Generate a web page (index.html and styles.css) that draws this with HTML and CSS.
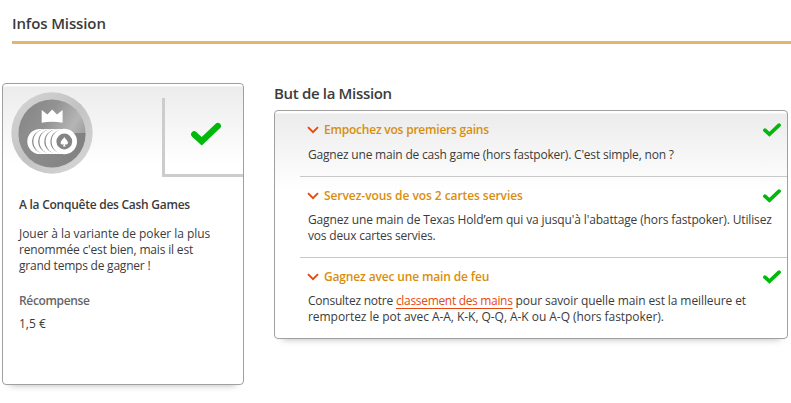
FILE: index.html
```html
<!DOCTYPE html>
<html lang="fr">
<head>
<meta charset="utf-8">
<title>Infos Mission</title>
<link rel="stylesheet" href="styles.css">
</head>
<body>
<svg class="defs" width="0" height="0" aria-hidden="true">
  <symbol id="check" viewBox="0 0 30 24"><path d="M3.2 12.4 10.7 19.2 26.8 4" fill="none" stroke="#00b90b" stroke-width="6.2" stroke-linecap="round" stroke-linejoin="miter"/></symbol>
  <symbol id="chevron" viewBox="0 0 12 8"><path d="M1 1.2 6 6.2 11 1.2" fill="none" stroke="#e8480f" stroke-width="1.9"/></symbol>
</svg>
<h1 class="page-title"><span class="title-text">Infos Mission</span></h1>
<main class="layout">
  <section class="card mission">
    <div class="mission-head">
      <svg class="badge" viewBox="0 0 82 82">
        <defs>
          <linearGradient id="rim" x1="0" y1="0" x2="1" y2="1"><stop offset="0" stop-color="#d6d6d6"/><stop offset=".5" stop-color="#c3c3c3"/><stop offset="1" stop-color="#d9d9d9"/></linearGradient>
          <linearGradient id="disc" x1="0" y1=".1" x2="1" y2=".65"><stop offset="0" stop-color="#858585"/><stop offset=".42" stop-color="#929292"/><stop offset=".75" stop-color="#b5b5b5"/><stop offset="1" stop-color="#969696"/></linearGradient>
          <linearGradient id="shade" x1="0" y1="0" x2="1" y2="0"><stop offset="0" stop-color="#8d8d8d"/><stop offset="1" stop-color="#818181"/></linearGradient>
        </defs>
        <circle cx="41" cy="41" r="40.7" fill="url(#rim)"/>
        <circle cx="41" cy="41" r="33.5" fill="url(#disc)"/>
        <path d="M7.5 43C25 47 45 40 74.5 41A33.5 33.5 0 0 1 7.5 43Z" fill="url(#shade)"/>
        <path d="M30.7 18 36.4 22.5 41.2 17.4 46 22.5 51.6 18V30.8Q41 28.8 30.7 30.8Z" fill="#fff"/>
        <g fill="#fff">
          <circle cx="28.9" cy="49.5" r="12.6"/><circle cx="32.9" cy="49.5" r="11.8" fill="#8b8b8b"/>
          <circle cx="35" cy="49.5" r="12.6"/><circle cx="39" cy="49.5" r="11.8" fill="#8b8b8b"/>
          <circle cx="41.1" cy="49.5" r="12.6"/><circle cx="45.1" cy="49.5" r="11.8" fill="#8b8b8b"/>
          <circle cx="47.2" cy="49.5" r="12.6"/><circle cx="51.2" cy="49.5" r="11.8" fill="#8b8b8b"/>
        </g>
        <circle cx="53.3" cy="49.5" r="10.3" fill="#858585" stroke="#fff" stroke-width="4.8"/>
        <path d="M53.3 45C52.4 47 49.6 48.4 49.6 50.8c0 1.8 2 2.4 3.2 1.2L52 54.4h2.6l-.8-2.4c1.2 1.2 3.2.6 3.2-1.2 0-2.4-2.8-3.8-3.7-5.8Z" fill="#fff"/>
      </svg>
      <div class="status"><svg class="check-large"><use href="#check"/></svg></div>
    </div>
    <div class="mission-body">
      <h2 class="mission-name"><span>A la Conquête des Cash Games</span></h2>
      <p class="mission-text"><span class="m1">Jouer à la variante de poker la plus</span><br><span class="m2">renommée c'est bien, mais il est</span><br><span class="m3">grand temps de gagner !</span></p>
      <h3 class="reward-title"><span>Récompense</span></h3>
      <p class="reward"><span>1,5 €</span></p>
    </div>
  </section>
  <section class="goals">
    <h2 class="goals-title"><span>But de la Mission</span></h2>
    <div class="card goal-list">
      <article class="goal first">
        <header class="goal-head"><svg class="chevron"><use href="#chevron"/></svg><h3 class="g1">Empochez vos premiers gains</h3><svg class="check-small"><use href="#check"/></svg></header>
        <p class="goal-text"><span class="t1">Gagnez une main de cash game (hors fastpoker). C'est simple, non ?</span></p>
      </article>
      <article class="goal second">
        <header class="goal-head"><svg class="chevron"><use href="#chevron"/></svg><h3 class="g2">Servez-vous de vos 2 cartes servies</h3><svg class="check-small"><use href="#check"/></svg></header>
        <p class="goal-text"><span class="t2">Gagnez une main de Texas Hold’em qui va jusqu'à l'abattage (hors fastpoker). Utilisez</span><br><span class="t3">vos deux cartes servies.</span></p>
      </article>
      <article class="goal third">
        <header class="goal-head"><svg class="chevron"><use href="#chevron"/></svg><h3 class="g3">Gagnez avec une main de feu</h3><svg class="check-small"><use href="#check"/></svg></header>
        <p class="goal-text"><span class="t4">Consultez notre <a class="link" href="#">classement des mains</a></span><span class="t4b"> pour savoir quelle main est la meilleure et</span><br><span class="t5">remportez le pot avec A-A, K-K, Q-Q, A-K ou A-Q (hors fastpoker).</span></p>
      </article>
    </div>
  </section>
</main>
</body>
</html>
```
FILE: styles.css
```css
* { box-sizing: border-box; }
body {
  margin: 0;
  height: 403px;
  overflow: hidden;
  background: #fff;
  color: #3b3b3b;
  font: 12px/16px "Trebuchet MS", "Open Sans", sans-serif;
}
h1, h2, h3, p { margin: 0; white-space: nowrap; }
svg { display: block; flex: none; }
.defs { position: absolute; }
.page-title {
  margin-left: 12px;
  height: 44px;
  padding-top: 13px;
  border-bottom: 3px solid #e0b76c;
  font-size: 15px;
  line-height: 20px;
  font-weight: 600;
  letter-spacing: -.12px;
}
.layout { display: flex; align-items: flex-start; gap: 30px; padding: 39px 3px 0 2px; }
.card {
  border: 1px solid #a0a0a0;
  border-radius: 4px;
  background: linear-gradient(#fff 2px, #ececec 3px, #fff 80px);
  box-shadow: 0 8px 7px -8px rgba(0, 0, 0, .3);
}
.mission { width: 242px; height: 302px; }
.mission-head { display: flex; justify-content: space-between; height: 93px; padding-left: 8px; }
.badge { width: 82px; height: 82px; margin-top: 8px; }
.status {
  width: 81px;
  height: 79px;
  margin-top: 14px;
  border-left: 3px solid #ccc;
  border-bottom: 3px solid #ccc;
}
.check-large { width: 30px; height: 24px; margin: 24px 0 0 26px; }
.mission-body { padding: 20px 0 0 16px; }
.mission-name { font-size: 12px; line-height: 16px; font-weight: 600; letter-spacing: -.26px; }
.mission-text { margin-top: 13px; line-height: 16px; }
.m1 { letter-spacing: -.05px; }
.m2 { letter-spacing: -.17px; }
.m3 { letter-spacing: -.22px; }
.reward-title { margin-top: 19px; font-size: 12px; line-height: 16px; font-weight: 600; letter-spacing: -.35px; color: #666; }
.reward { margin-top: 7px; }
.goals { width: 514px; }
.goals-title { height: 27px; font-size: 15px; line-height: 20px; font-weight: 600; letter-spacing: -.33px; }
.goal-list { height: 229px; padding-left: 25px; }
.goal { padding-left: 8px; border-top: 1px solid #c8c8c8; }
.goal.first { height: 65px; border-top: 0; padding-top: 11px; }
.goal.second { height: 81px; padding-top: 11px; }
.goal.third { height: 80px; padding-top: 11px; }
.goal-head { display: flex; height: 16px; align-items: center; padding-right: 6px; }
.goal-head h3 { flex: 1; font-size: 12px; line-height: 16px; font-weight: 600; color: #d98e0b; }
.goal-head .g1 { letter-spacing: -.22px; }
.goal-head .g2 { letter-spacing: -.07px; }
.goal-head .g3 { letter-spacing: -.15px; }
.chevron { width: 12px; height: 8px; margin: 0 5px 0 -1px; }
.check-small { width: 18px; height: 16px; overflow: visible; }
.goal-text { margin-top: 8px; }
.goal.first .goal-text { margin-top: 9px; }
.t1 { letter-spacing: -.2px; }
.t2 { letter-spacing: -.135px; }
.t3 { letter-spacing: -.19px; }
.t4 { letter-spacing: -.23px; }
.t4b { letter-spacing: -.1px; }
.t5 { letter-spacing: -.05px; }
.link {
  color: #e8480f;
  letter-spacing: -.32px;
  text-decoration: underline 1px;
  text-underline-offset: 3px;
  text-decoration-skip-ink: none;
}
```
